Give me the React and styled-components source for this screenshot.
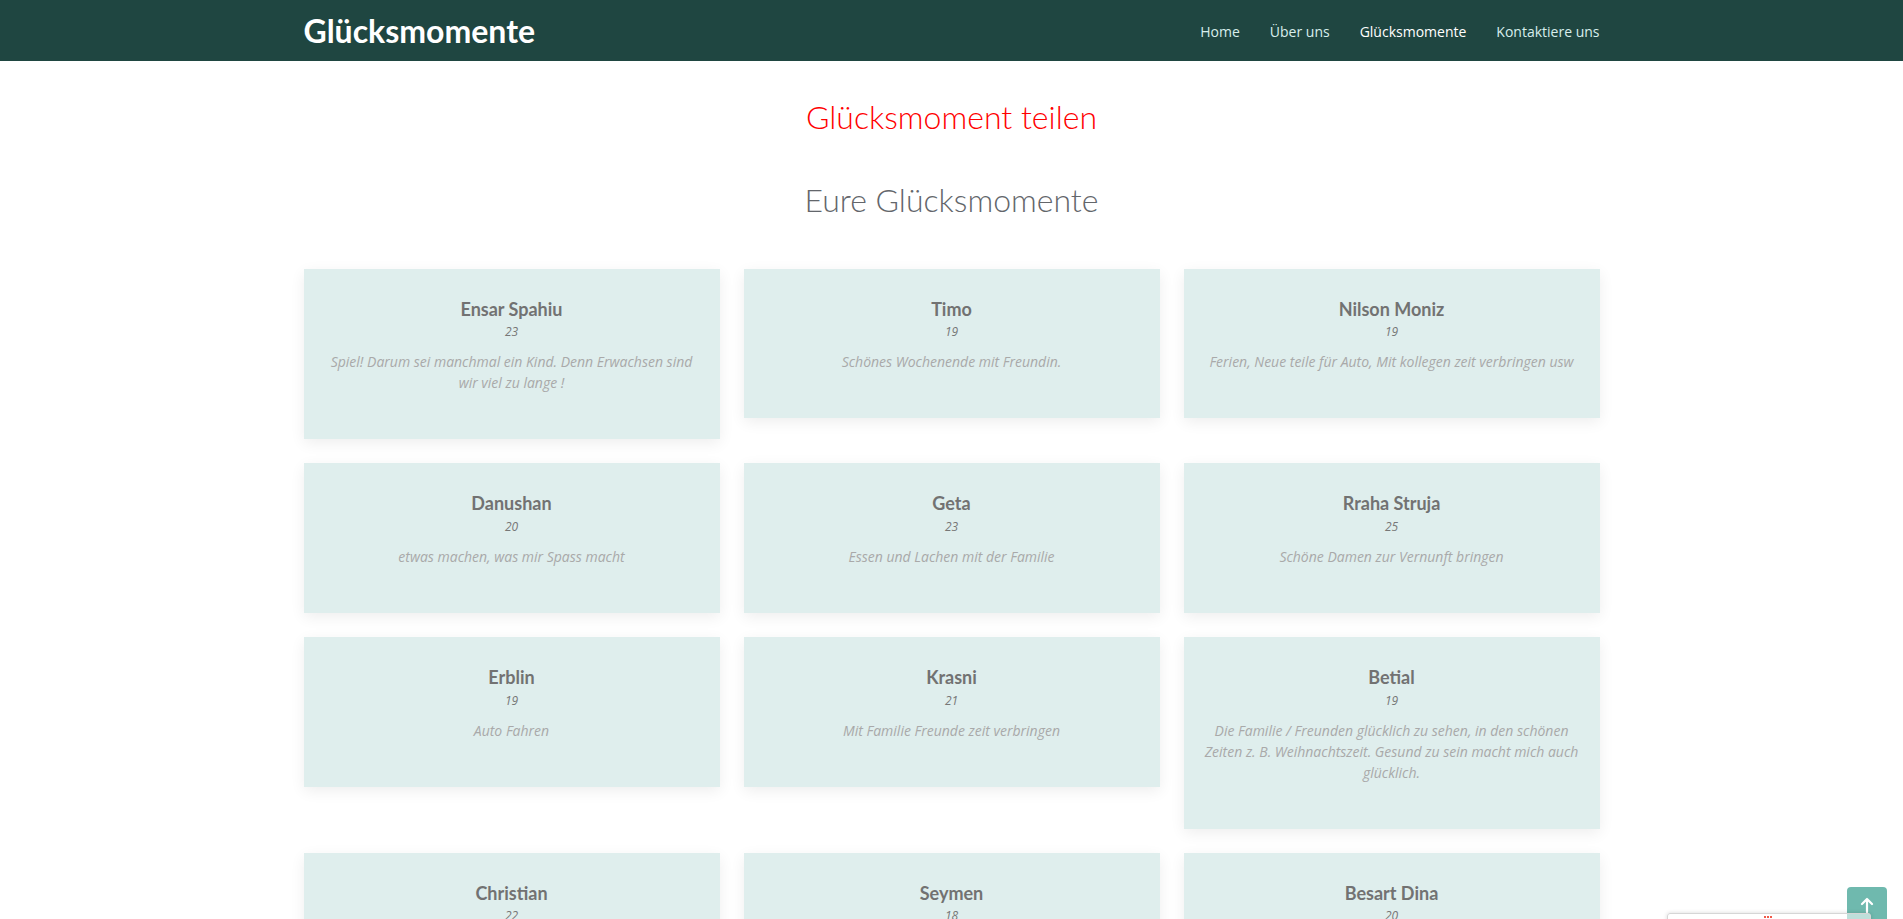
import React from "react";
import styled, { createGlobalStyle } from "styled-components";

const moments = [
	{ name: "Ensar Spahiu", age: 23, text: "Spiel! Darum sei manchmal ein Kind. Denn Erwachsen sind wir viel zu lange !" },
	{ name: "Timo", age: 19, text: "Schönes Wochenende mit Freundin." },
	{ name: "Nilson Moniz", age: 19, text: "Ferien, Neue teile für Auto, Mit kollegen zeit verbringen usw" },
	{ name: "Danushan", age: 20, text: "etwas machen, was mir Spass macht" },
	{ name: "Geta", age: 23, text: "Essen und Lachen mit der Familie" },
	{ name: "Rraha Struja", age: 25, text: "Schöne Damen zur Vernunft bringen" },
	{ name: "Erblin", age: 19, text: "Auto Fahren" },
	{ name: "Krasni", age: 21, text: "Mit Familie Freunde zeit verbringen" },
	{
		name: "Betial",
		age: 19,
		text: "Die Familie / Freunden glücklich zu sehen, in den schönen Zeiten z. B. Weihnachtszeit. Gesund zu sein macht mich auch glücklich.",
	},
	{ name: "Christian", age: 22, text: "Zeit mit Freunden" },
	{ name: "Seymen", age: 18, text: "Fussball spielen" },
	{ name: "Besart Dina", age: 20, text: "Reisen mit der Familie" },
];

const navLinks = ["Home", "Über uns", "Glücksmomente", "Kontaktiere uns"];

const GlobalStyle = createGlobalStyle`
	* {
		box-sizing: border-box;
	}
	body {
		margin: 0;
		background: #fff;
		font-family: "Open Sans", "Liberation Sans", sans-serif;
	}
	::-webkit-scrollbar {
		width: 2px;
		background: #eee;
	}
`;

const Navbar = styled.header`
	background: #1f4641;
	height: 61px;
`;

const Container = styled.div`
	width: 1296px;
	margin: 0 auto;
`;

const NavInner = styled(Container)`
	height: 100%;
	display: flex;
	align-items: center;
	justify-content: space-between;
`;

const Brand = styled.a`
	font-family: Lato, "Liberation Sans", sans-serif;
	font-weight: 700;
	font-size: 32px;
	line-height: 1.2;
	color: #fff;
	text-decoration: none;
	margin-top: 1px;
`;

const NavList = styled.nav`
	display: flex;
	gap: 30px;
	margin-top: 2px;
`;

const NavLink = styled.a`
	font-family: "Open Sans", sans-serif;
	font-size: 14px;
	color: ${({ active }) => (active ? "#fff" : "#d8eeec")};
	text-decoration: none;
`;

const Main = styled.main`
	padding: 37px 0 40px;
`;

const ShareTitle = styled.h1`
	margin: 0;
	text-align: center;
	font-family: Lato, sans-serif;
	font-weight: 300;
	font-size: 32px;
	line-height: 1.2;
	color: #ff0000;
`;

const SectionTitle = styled.h2`
	margin: 45px 0 49px;
	text-align: center;
	font-family: Lato, sans-serif;
	font-weight: 300;
	font-size: 32px;
	line-height: 1.2;
	color: #63666b;
`;

const Grid = styled.div`
	display: grid;
	grid-template-columns: repeat(3, 1fr);
	gap: 24px;
	align-items: start;
`;

const Card = styled.div`
	background: #dfeeed;
	padding: 30px 19px 46px;
	text-align: center;
	box-shadow: 0 4px 14px rgba(0, 0, 0, 0.07);
`;

const Name = styled.h3`
	margin: 0;
	font-family: Lato, sans-serif;
	font-weight: 700;
	font-size: 18px;
	line-height: 1.2;
	color: #727272;
`;

const Age = styled.div`
	margin-top: 3px;
	font-size: 12px;
	line-height: 18px;
	font-style: italic;
	color: #777;
`;

const Text = styled.p`
	margin: 10px 0 0;
	font-size: 14px;
	line-height: 21px;
	font-style: italic;
	color: #a9a9a9;
`;

const ToTop = styled.a`
	position: fixed;
	right: 16px;
	bottom: -8px;
	width: 40px;
	height: 40px;
	border-radius: 4px;
	background: #6fb9ae;
	display: flex;
	align-items: flex-start;
	justify-content: center;
	padding-top: 10px;
	z-index: 5;
`;

const Badge = styled.div`
	position: fixed;
	left: 1667px;
	top: 913px;
	width: 204px;
	height: 60px;
	border: 1px solid #d6d6d6;
	border-radius: 3px;
	background: rgba(255, 255, 255, 0.55);
	box-shadow: 0 0 4px rgba(0, 0, 0, 0.15);
	z-index: 6;
`;

const BadgeMark = styled.span`
	position: absolute;
	left: 96px;
	top: 2px;
	width: 8px;
	height: 3px;
	border-top: 2px dotted #f05a4a;
`;

const App = () => (
	<>
		<GlobalStyle />
		<Navbar>
			<NavInner>
				<Brand href="#">Glücksmomente</Brand>
				<NavList>
					{navLinks.map((link) => (
						<NavLink key={link} href="#" active={link === "Glücksmomente" ? 1 : 0}>
							{link}
						</NavLink>
					))}
				</NavList>
			</NavInner>
		</Navbar>
		<Main>
			<Container>
				<ShareTitle>Glücksmoment teilen</ShareTitle>
				<SectionTitle>Eure Glücksmomente</SectionTitle>
				<Grid>
					{moments.map((m) => (
						<Card key={m.name}>
							<Name>{m.name}</Name>
							<Age>{m.age}</Age>
							<Text>{m.text}</Text>
						</Card>
					))}
				</Grid>
			</Container>
		</Main>
		<ToTop href="#">
			<svg width="14" height="16" viewBox="0 0 14 16" fill="none" stroke="#fff" strokeWidth="2.2" strokeLinecap="round" strokeLinejoin="round">
				<path d="M7 15V2M2 7l5-5 5 5" />
			</svg>
		</ToTop>
		<Badge>
			<BadgeMark />
		</Badge>
	</>
);

export default App;
